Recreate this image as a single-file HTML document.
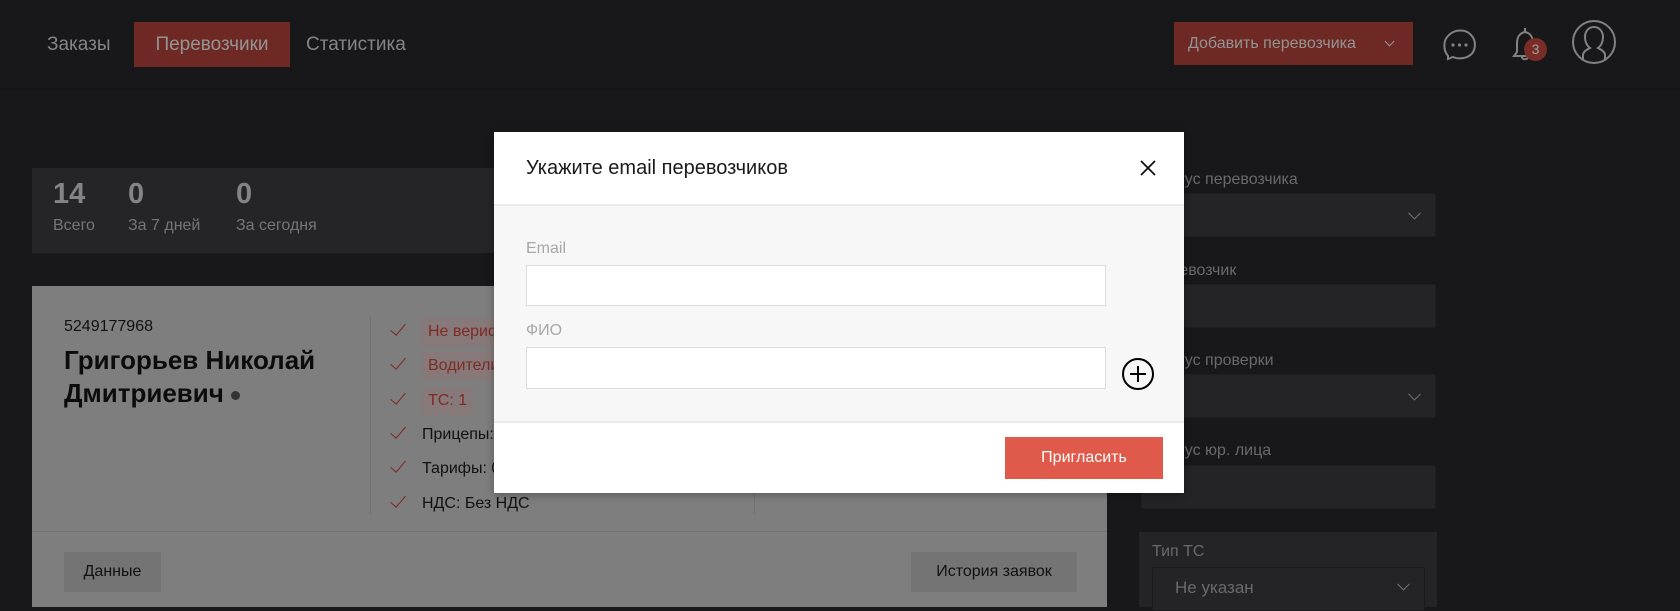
<!DOCTYPE html>
<html><head><meta charset="utf-8"><style>
*{box-sizing:border-box;margin:0;padding:0}
body{width:1680px;height:607px;overflow:hidden;background:#18181a;font-family:"Liberation Sans",sans-serif;position:relative}
.abs{position:absolute}
.hdr{left:0;top:0;width:1680px;height:89px;border-bottom:1px solid #121214;background:#18181a}
.nav{top:22px;height:45px;line-height:45px;font-size:19px;color:#858585}
.lbl{color:#6a6a6c;font-size:16px}
.sel{background:#242427;border:1px solid #1f1f21;border-radius:2px}
.chev{position:absolute;right:16px;top:50%;width:9px;height:9px;border-right:1.3px solid #727272;border-bottom:1.3px solid #727272;transform:translateY(-70%) rotate(45deg)}
.item{left:394px;font-size:16px;color:#111;height:28px;line-height:28px}
.chk{position:absolute;left:0;top:2px;width:8px;height:15px;border-right:1.6px solid #7e2a25;border-bottom:1.6px solid #7e2a25;transform:rotate(40deg)}
.tag{position:absolute;left:28px;top:0;padding:0 6px;background:#877979;color:#7e2a25;white-space:nowrap}
.txt{position:absolute;left:28px;top:0;white-space:nowrap}
</style></head><body>
<div class="abs hdr"></div>
<div class="abs nav" style="left:47px">Заказы</div>
<div class="abs nav" style="left:134px;width:156px;background:#6e2924;text-align:center;color:#949494">Перевозчики</div>
<div class="abs nav" style="left:306px">Статистика</div>
<div class="abs" style="left:1174px;top:22px;width:239px;height:43px;background:#6e2924;color:#949494;font-size:16px;line-height:43px;padding-left:14px">Добавить перевозчика<span style="position:absolute;right:20px;top:16px;width:7px;height:7px;border-right:1.5px solid #999;border-bottom:1.5px solid #999;transform:rotate(45deg)"></span></div>
<svg class="abs" style="left:1440px;top:25px" width="40" height="40" viewBox="0 0 40 40"><path d="M8 31 C3 25 3 15 9 10 C15 4 26 4 31 10 C37 16 36 27 29 31 C24 34 17 34 13 32 L8 34 Z" fill="none" stroke="#828282" stroke-width="2"/><circle cx="13" cy="20" r="1.6" fill="#828282"/><circle cx="19.5" cy="20" r="1.6" fill="#828282"/><circle cx="26" cy="20" r="1.6" fill="#828282"/></svg>
<svg class="abs" style="left:1508px;top:26px" width="36" height="40" viewBox="0 0 36 40"><path d="M6 30 L9 26 L9 17 C9 11 12 7 17 6 C22 7 25 11 25 17 L25 26 L28 30 Z M14 31 C14 34 20 34 20 31" fill="none" stroke="#828282" stroke-width="2"/><path d="M17 2 L17 6" stroke="#828282" stroke-width="2"/></svg>
<div class="abs" style="left:1524px;top:38px;width:23px;height:23px;border-radius:50%;background:#7a2c27;color:#a0a0a0;font-size:14px;text-align:center;line-height:23px">3</div>
<svg class="abs" style="left:1571px;top:19px" width="46" height="46" viewBox="0 0 46 46"><circle cx="23" cy="23" r="21" fill="none" stroke="#828282" stroke-width="2"/><path d="M12 41 L12 36 C12 32 17 30 19 29 C15 26 14 22 14 18 C14 12 18 8 23 8 C28 8 32 12 32 18 C32 22 31 26 27 29 C29 30 34 32 34 36 L34 41" fill="none" stroke="#828282" stroke-width="2"/></svg>

<div class="abs" style="left:32px;top:168px;width:1075px;height:85px;background:#252527"></div>
<div class="abs" style="left:53px;top:178px;font-size:29px;font-weight:bold;color:#848484">14</div>
<div class="abs" style="left:128px;top:178px;font-size:29px;font-weight:bold;color:#848484">0</div>
<div class="abs" style="left:236px;top:178px;font-size:29px;font-weight:bold;color:#848484">0</div>
<div class="abs" style="left:53px;top:217px;font-size:16px;color:#767676">Всего</div>
<div class="abs" style="left:128px;top:217px;font-size:16px;color:#767676">За 7 дней</div>
<div class="abs" style="left:236px;top:217px;font-size:16px;color:#767676">За сегодня</div>

<div class="abs" style="left:32px;top:286px;width:1075px;height:321px;background:#7e7e7e"></div>
<div class="abs" style="left:64px;top:318px;font-size:16px;color:#111">5249177968</div>
<div class="abs" style="left:64px;top:344px;font-size:26px;font-weight:bold;color:#0c0c0c;line-height:33px">Григорьев Николай<br>Дмитриевич <span style="display:inline-block;width:9px;height:9px;border-radius:50%;background:#333;vertical-align:middle"></span></div>
<div class="abs" style="left:370px;top:316px;width:1px;height:198px;background:#737373"></div>
<div class="abs" style="left:754px;top:316px;width:1px;height:198px;background:#737373"></div>
<div class="abs item" style="top:318px"><span class="chk"></span><span class="tag">Не верифицирован</span></div>
<div class="abs item" style="top:352px"><span class="chk"></span><span class="tag">Водители: 0</span></div>
<div class="abs item" style="top:387px"><span class="chk"></span><span class="tag">ТС: 1</span></div>
<div class="abs item" style="top:421px"><span class="chk"></span><span class="txt">Прицепы: 0</span></div>
<div class="abs item" style="top:455px"><span class="chk"></span><span class="txt">Тарифы: 0</span></div>
<div class="abs item" style="top:490px"><span class="chk"></span><span class="txt">НДС: Без НДС</span></div>
<div class="abs" style="left:32px;top:531px;width:1075px;height:1px;background:#737373"></div>
<div class="abs" style="left:64px;top:552px;width:97px;height:40px;background:#747474;font-size:16px;line-height:40px;text-align:center;color:#111">Данные</div>
<div class="abs" style="left:911px;top:552px;width:166px;height:40px;background:#747474;font-size:16px;line-height:40px;text-align:center;color:#111">История заявок</div>

<div class="abs lbl" style="left:1150px;top:171px">Статус перевозчика</div>
<div class="abs sel" style="left:1141px;top:193px;width:295px;height:44px"><span class="chev"></span></div>
<div class="abs lbl" style="left:1150px;top:262px">Перевозчик</div>
<div class="abs sel" style="left:1141px;top:284px;width:295px;height:44px"></div>
<div class="abs lbl" style="left:1150px;top:352px">Статус проверки</div>
<div class="abs sel" style="left:1141px;top:374px;width:295px;height:44px"><span class="abs" style="left:12px;top:12px;color:#6a6a6c;font-size:16px">Все</span><span class="chev"></span></div>
<div class="abs lbl" style="left:1150px;top:442px">Статус юр. лица</div>
<div class="abs sel" style="left:1141px;top:465px;width:295px;height:44px"></div>
<div class="abs" style="left:1139px;top:532px;width:298px;height:75px;background:#242427"></div>
<div class="abs lbl" style="left:1152px;top:543px">Тип ТС</div>
<div class="abs sel" style="left:1152px;top:567px;width:273px;height:44px;border-color:#1b1b1d"><span class="abs" style="left:22px;top:10px;color:#6a6a6c;font-size:17px">Не указан</span><span class="chev" style="top:42%"></span></div>

<div class="abs" style="left:494px;top:132px;width:690px;height:361px;background:#fff;box-shadow:0 2px 8px rgba(0,0,0,.3)">
 <div class="abs" style="left:32px;top:25px;font-size:20px;color:#1a1a1a">Укажите email перевозчиков</div>
 <svg class="abs" style="left:646px;top:28px" width="16" height="16" viewBox="0 0 16 16"><path d="M1 1 L15 15 M15 1 L1 15" stroke="#111" stroke-width="1.8"/></svg>
 <div class="abs" style="left:0;top:72px;width:690px;height:219px;background:#f7f7f7;border-top:2px solid #ebebeb;border-bottom:2px solid #ebebeb"></div>
 <div class="abs" style="left:32px;top:108px;font-size:16px;color:#a8a8a8">Email</div>
 <div class="abs" style="left:32px;top:133px;width:580px;height:41px;background:#fff;border:1.5px solid #dcdcdc"></div>
 <div class="abs" style="left:32px;top:190px;font-size:16px;color:#a8a8a8">ФИО</div>
 <div class="abs" style="left:32px;top:215px;width:580px;height:42px;background:#fff;border:1.5px solid #dcdcdc"></div>
 <svg class="abs" style="left:627px;top:225px" width="34" height="34" viewBox="0 0 34 34"><circle cx="17" cy="17" r="15" fill="none" stroke="#000" stroke-width="2"/><path d="M17 9 V25 M9 17 H25" stroke="#000" stroke-width="2"/></svg>
 <div class="abs" style="left:511px;top:305px;width:158px;height:42px;background:#e05a4b;color:#fff;font-size:16px;text-align:center;line-height:42px">Пригласить</div>
</div>
</body></html>
